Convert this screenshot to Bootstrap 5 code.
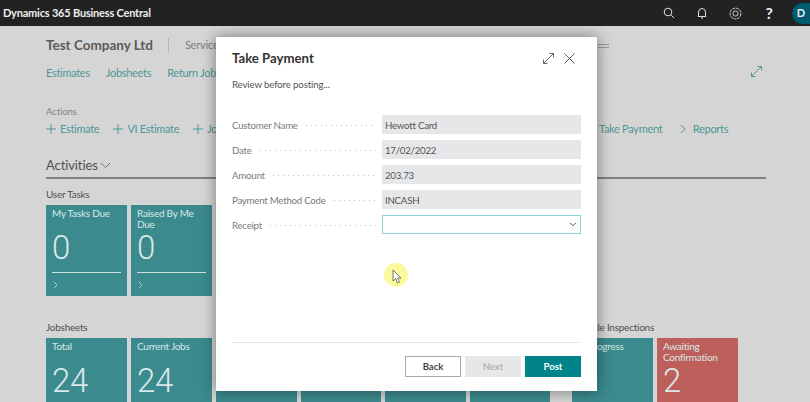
<!doctype html>
<html lang="en"><head><meta charset="utf-8"><title>Take Payment</title>
<link rel="stylesheet" href="https://cdn.jsdelivr.net/npm/bootstrap@5.3.0/dist/css/bootstrap.min.css">
<style>
html,body{height:402px;overflow:hidden}
body{background:#d5d5d5;font-family:Lato,Roboto,sans-serif;color:#5c5c5c;position:relative;width:810px}
.bc-top{background:#222;height:26px;padding:0 0 0 3px;flex-wrap:nowrap}
.bc-brand{color:#eee;font-size:11px;font-weight:700;letter-spacing:-.2px}
.bc-ic{width:33.500px;display:flex;justify-content:center;color:#ddd}
.bc-q{color:#eee;font-weight:700;font-size:16px;line-height:1}
.bc-av{width:18px;height:21px;background:#005b70;color:#eee;border-radius:11px 0 0 11px;font-size:11px;font-weight:700;display:flex;align-items:center;justify-content:center;margin-left:6px}
.bc-page{padding:9px 44px 0 46px;height:376px;overflow:hidden}
.bc-head{height:20px}
.bc-co{font-size:13.500px;font-weight:700;color:#5a5a5a;line-height:20px}
.bc-sep{width:1px;height:15px;background:#b5b5b5;margin:0 16px 0 15px}
.bc-svc{font-size:11px;letter-spacing:-.2px;color:#808080}
.bc-burger{position:absolute;left:598px;top:44px;width:11px;height:4px;border-top:1px solid #999;border-bottom:1px solid #999}
.bc-links{font-size:11px;letter-spacing:-.3px;color:#4f9795;gap:16px;margin-top:9px;height:17px;line-height:17px;position:relative}
.bc-exp{position:absolute;left:704px;top:1px}
.bc-act-l{font-size:9.500px;letter-spacing:-.1px;color:#828282;margin-top:24px;line-height:13px}
.bc-acts{font-size:11px;letter-spacing:-.3px;color:#4f9795;line-height:16px;margin-top:3px;height:16px;position:relative}
.bc-acts span{display:inline-flex;align-items:center;gap:4px}
.bc-a1{gap:14px}
.bc-a2{position:absolute;left:553px;top:0;gap:18px}
.bc-sec{font-size:13px;letter-spacing:-.1px;font-weight:400;color:#4f4f4f;margin-top:19px;line-height:18px;height:23px;border-bottom:2px solid #808080;display:flex;gap:2px;padding-bottom:2px}
.bc-lbl{font-size:10px;letter-spacing:-.25px;color:#505050;line-height:14px;font-weight:400}
.bc-tiles{gap:4px}
.bc-tile{width:81px;height:91px;background:#3b8a8d;color:#d8e8e8;padding:3px 6px;font-size:10px;letter-spacing:-.25px;line-height:11px;flex:none;position:relative}
.bc-tile.bc-w{width:80.500px}
.bc-red{background:#bd5f5b}
.bc-num{font-family:Roboto,sans-serif;font-size:33px;letter-spacing:-.4px;font-weight:300;line-height:26px;position:absolute;left:6px;top:30px}
.bc-rule{position:absolute;left:6px;right:6px;top:67px;border-top:1px solid #cfe2e2}
.bc-ch{position:absolute;left:7px;top:76px}
.bc-gapx{width:14px;flex:none}
.bc-modal{position:absolute;left:216px;top:37px;width:381px;height:354px;background:#fff;border:0;border-radius:0;box-shadow:0 0 14px rgba(0,0,0,.45);padding:13px 16px 14px;color:#555}
.bc-mt{font-size:13.200px;font-weight:700;color:#333;line-height:16px}
.bc-rv{font-size:9.700px;letter-spacing:-.15px;color:#555;margin-top:11px;line-height:14px;margin-bottom:24px}
.bc-f{height:19px;align-items:center;margin-bottom:6px}
.bc-fl{width:150px;flex:none;font-size:9.700px;letter-spacing:-.25px;color:#7a7a7a;display:flex;align-items:center;gap:8px;padding-right:6px;padding-top:1px;white-space:nowrap}
.bc-fl i{flex:1;height:1px;margin-top:1px;background:repeating-linear-gradient(90deg,#bdbdbd 0 1px,transparent 1px 5px)}
.bc-v{flex:1;height:19px;background:#e6e7e9;border:0;border-radius:0;padding:0 3px;font-size:9.700px;letter-spacing:-.25px;line-height:21px;color:#555;min-height:0}
.bc-sel{flex:1;height:19px;min-height:0;border:1px solid #8fd5d5;border-radius:0;padding:0 3px;font-size:10px;background-color:#fff;background-size:8px 7px;background-position:right 3px center}
.bc-ft{border-top:1px solid #e9e9e9;padding-top:13px;gap:4px;margin-top:auto}
.bc-b{width:56px;height:21px;padding:0;border-radius:0;font-size:9.500px;font-weight:700;line-height:19px}
.bc-back{background:#fff;border:1px solid #aaa;color:#444}
.bc-next{background:#e6e7e9;border:1px solid #e6e7e9;color:#b5b5b5}
.bc-post{background:#008489;border:1px solid #008489;color:#fff}
.bc-dot{position:absolute;left:384px;top:263px;width:24px;height:24px;border-radius:50%;background:#fbfb9e}
.bc-cur{position:absolute;left:392px;top:269px}
.bc-r1{margin-top:4px}
.bc-r2{margin-top:24px}
.bc-insp{margin-right:112px}
.bc-m1{margin-right:10px}
.bc-m2{margin-right:6px}
</style></head>
<body>
<nav class="navbar bc-top justify-content-between">
  <span class="bc-brand">Dynamics 365 Business Central</span>
  <div class="d-flex align-items-center">
    <span class="bc-ic"><svg width="12" height="12" viewBox="0 0 12 12" fill="none" stroke="currentColor"><circle cx="5" cy="5" r="3.800"/><path d="M8 8l3 3"/></svg></span>
    <span class="bc-ic"><svg width="12" height="13" viewBox="0 0 12 13" fill="none" stroke="currentColor"><path d="M2.500 9.500V5a3.500 3.500 0 0 1 7 0v4.500zM1.800 9.500h8.400M5 11h2"/></svg></span>
    <span class="bc-ic"><svg width="13" height="13" viewBox="0 0 13 13" fill="none" stroke="currentColor" stroke-width=".9"><circle cx="6.500" cy="6.500" r="2.600"/><circle cx="6.500" cy="6.500" r="5.400" stroke-dasharray="3 .6"/></svg></span>
    <span class="bc-ic bc-q">?</span>
    <span class="bc-av">D</span>
  </div>
</nav>
<main class="bc-page">
  <div class="d-flex align-items-center bc-head"><span class="bc-co">Test Company Ltd</span><span class="bc-sep"></span><span class="bc-svc">Service</span></div>
  <div class="bc-burger"></div>
  <div class="d-flex bc-links"><span>Estimates</span><span>Jobsheets</span><span>Return Job</span>
    <svg class="bc-exp" width="13" height="13" viewBox="0 0 13 13" fill="none" stroke="#4f9795"><path d="M1.500 11.500l10-10M7.500 1.500h4v4M1.500 7.500v4h4"/></svg></div>
  <div class="bc-act-l">Actions</div>
  <div class="bc-acts d-flex">
    <div class="d-flex bc-a1">
      <span><svg width="10" height="10" viewBox="0 0 10 10" stroke="#4f9795" fill="none"><path d="M5 0v10M0 5h10"/></svg>Estimate</span>
      <span><svg width="10" height="10" viewBox="0 0 10 10" stroke="#4f9795" fill="none"><path d="M5 0v10M0 5h10"/></svg>VI Estimate</span>
      <span><svg width="10" height="10" viewBox="0 0 10 10" stroke="#4f9795" fill="none"><path d="M5 0v10M0 5h10"/></svg>Jo</span>
    </div>
    <div class="d-flex bc-a2"><span>Take Payment</span><span><svg width="6" height="10" viewBox="0 0 6 10" stroke="#4f9795" fill="none"><path d="M1 1l4 4-4 4"/></svg>&nbsp;Reports</span></div>
  </div>
  <div class="bc-sec"><span>Activities</span><svg class="mt-1" width="11" height="11" viewBox="0 0 11 11" stroke="#777" fill="none"><path d="M1 3l4.500 4.500L10 3"/></svg></div>
  <div class="bc-lbl mt-2">User Tasks</div>
  <div class="d-flex bc-tiles bc-r1">
    <div class="bc-tile">My Tasks Due<div class="bc-num">0</div><div class="bc-rule"></div><svg class="bc-ch" width="5" height="8" viewBox="0 0 5 8" stroke="#a9cccc" fill="none"><path d="M.5.500L4 4 .5 7.500"/></svg></div>
    <div class="bc-tile">Raised By Me Due<div class="bc-num">0</div><div class="bc-rule"></div><svg class="bc-ch" width="5" height="8" viewBox="0 0 5 8" stroke="#a9cccc" fill="none"><path d="M.5.500L4 4 .5 7.500"/></svg></div>
  </div>
  <div class="d-flex bc-r2"><div class="bc-lbl">Jobsheets</div><div class="bc-lbl ms-auto bc-insp">Vehicle Inspections</div></div>
  <div class="d-flex bc-tiles bc-r1">
    <div class="bc-tile">Total<div class="bc-num">24</div></div>
    <div class="bc-tile">Current Jobs<div class="bc-num">24</div></div>
    <div class="bc-tile bc-w"></div>
    <div class="bc-tile bc-w"></div>
    <div class="bc-tile bc-w"></div>
    <div class="bc-tile bc-w"></div>
    <div class="bc-gapx"></div>
    <div class="bc-tile">In Progress</div>
    <div class="bc-tile bc-red">Awaiting Confirmation<div class="bc-num">2</div></div>
  </div>
</main>
<section class="modal-content bc-modal d-flex flex-column">
  <div class="d-flex justify-content-between align-items-center bc-mt"><span>Take Payment</span>
    <span class="d-flex align-items-center">
      <svg class="bc-m1" width="11" height="11" viewBox="0 0 11 11" fill="none" stroke="#666"><path d="M.5 10.500l10-10M6.500.500h4v4M.5 6.500v4h4"/></svg>
      <svg class="bc-m2" width="11" height="11" viewBox="0 0 11 11" fill="none" stroke="#555"><path d="M.5.500l10 10M10.500.500l-10 10"/></svg>
    </span></div>
  <div class="bc-rv">Review before posting...</div>
  <div class="d-flex bc-f"><div class="bc-fl">Customer Name<i></i></div><div class="form-control bc-v">Hewott Card</div></div>
  <div class="d-flex bc-f"><div class="bc-fl">Date<i></i></div><div class="form-control bc-v">17/02/2022</div></div>
  <div class="d-flex bc-f"><div class="bc-fl">Amount<i></i></div><div class="form-control bc-v">203.73</div></div>
  <div class="d-flex bc-f"><div class="bc-fl">Payment Method Code<i></i></div><div class="form-control bc-v">INCASH</div></div>
  <div class="d-flex bc-f"><div class="bc-fl">Receipt<i></i></div><select class="form-select bc-sel" aria-label="Receipt"><option></option></select></div>
  <div class="d-flex justify-content-end bc-ft">
    <button class="btn bc-b bc-back">Back</button>
    <button class="btn bc-b bc-next">Next</button>
    <button class="btn bc-b bc-post">Post</button>
  </div>
</section>
<div class="bc-dot"></div>
<svg class="bc-cur" width="10" height="15" viewBox="0 0 10 15"><path d="M1 1v11l2.800-2.300L5.500 14l2-.9-1.800-4H9z" fill="#fff" stroke="#666" stroke-width=".9"/></svg>
<script src="https://cdn.jsdelivr.net/npm/bootstrap@5.3.0/dist/js/bootstrap.bundle.min.js"></script>
</body></html>
